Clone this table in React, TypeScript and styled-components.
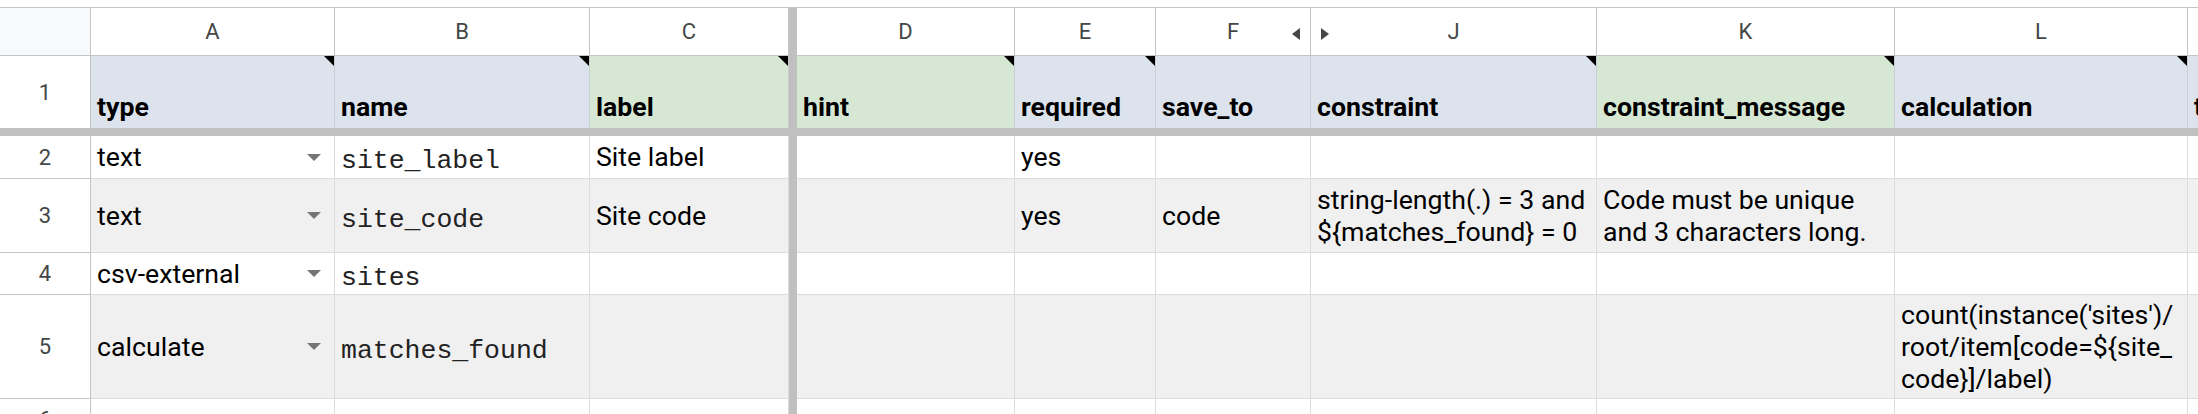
import React from 'react'
import styled, { createGlobalStyle } from 'styled-components'

const GlobalStyle = createGlobalStyle`
  html, body {
    margin: 0;
    padding: 0;
    background: #ffffff;
    overflow: hidden;
  }
  body {
    font-family: Roboto, "Liberation Sans", Arial, sans-serif;
  }
`

const BLUE = '#dde3ec'
const GREEN = '#d6e8d3'
const STRIPE = '#f0f0f0'
const CHROME_LINE = '#c4c4c4'
const CELL_LINE = '#dcdcdc'

// column widths, divider (frozen column split) included
const COLS = '91px 244px 255px 199px 8px 218px 141px 155px 286px 298px 293px 120px'

type Col = {
  letter: string
  header: string
  tint: string
  note: boolean
  hiddenLeft?: boolean
  hiddenRight?: boolean
}

const columns: Col[] = [
  { letter: 'A', header: 'type', tint: BLUE, note: true },
  { letter: 'B', header: 'name', tint: BLUE, note: true },
  { letter: 'C', header: 'label', tint: GREEN, note: true },
  { letter: 'D', header: 'hint', tint: GREEN, note: true },
  { letter: 'E', header: 'required', tint: BLUE, note: true },
  { letter: 'F', header: 'save_to', tint: BLUE, note: false, hiddenRight: true },
  { letter: 'J', header: 'constraint', tint: BLUE, note: true, hiddenLeft: true },
  { letter: 'K', header: 'constraint_message', tint: GREEN, note: true },
  { letter: 'L', header: 'calculation', tint: BLUE, note: true },
  { letter: 'M', header: 'trigger', tint: BLUE, note: false },
]

type Row = {
  num: number
  height: number
  striped: boolean
  type?: string
  cells: string[]
}

const rows: Row[] = [
  { num: 2, height: 43, striped: false, type: 'text', cells: ['site_label', 'Site label', '', 'yes', '', '', '', '', ''] },
  {
    num: 3,
    height: 74,
    striped: true,
    type: 'text',
    cells: [
      'site_code',
      'Site code',
      '',
      'yes',
      'code',
      'string-length(.) = 3 and\n${matches_found} = 0',
      'Code must be unique\nand 3 characters long.',
      '',
      '',
    ],
  },
  { num: 4, height: 42, striped: false, type: 'csv-external', cells: ['sites', '', '', '', '', '', '', '', ''] },
  {
    num: 5,
    height: 104,
    striped: true,
    type: 'calculate',
    cells: ['matches_found', '', '', '', '', '', '', "count(instance('sites')/\nroot/item[code=${site_\ncode}]/label)", ''],
  },
  { num: 6, height: 42, striped: false, cells: ['', '', '', '', '', '', '', '', ''] },
]

const Viewport = styled.div`
  width: 2198px;
  height: 414px;
  padding-top: 7px;
  box-sizing: border-box;
  overflow: hidden;
`

const Sheet = styled.div`
  width: max-content;
  border-top: 1px solid ${CHROME_LINE};
`

const GridRow = styled.div<{ $h: number }>`
  display: grid;
  grid-template-columns: ${COLS};
  height: ${(p) => p.$h}px;
`

const Corner = styled.div`
  background: #f8f9fa;
  border-right: 1px solid ${CHROME_LINE};
  border-bottom: 1px solid ${CHROME_LINE};
`

const ColLetter = styled.div`
  position: relative;
  display: flex;
  align-items: center;
  justify-content: center;
  background: #ffffff;
  border-right: 1px solid ${CHROME_LINE};
  border-bottom: 1px solid ${CHROME_LINE};
  color: #444746;
  font-size: 22px;
`

const HiddenArrow = styled.svg<{ $side: 'left' | 'right' }>`
  position: absolute;
  top: 20px;
  ${(p) => (p.$side === 'left' ? 'right: 10px;' : 'left: 10px;')}
`

const Divider = styled.div`
  background: #c0c0c0;
`

const RowNum = styled.div<{ $last?: boolean }>`
  display: flex;
  align-items: center;
  justify-content: center;
  background: #ffffff;
  border-right: 1px solid ${CHROME_LINE};
  border-bottom: ${(p) => (p.$last ? 'none' : `1px solid ${CHROME_LINE}`)};
  color: #444746;
  font-size: 22px;
`

const HeadCell = styled.div<{ $bg: string }>`
  position: relative;
  display: flex;
  align-items: flex-end;
  padding: 0 6px 5px;
  background: ${(p) => p.$bg};
  border-right: 1px solid #c9ced4;
  font-size: 26.7px;
  font-weight: 700;
  line-height: 32px;
  color: #000;
  white-space: nowrap;
  overflow: hidden;
`

const NoteMark = styled.span`
  position: absolute;
  top: 0;
  right: 0;
  width: 10px;
  height: 10px;
  background: #000;
  clip-path: polygon(0 0, 100% 0, 100% 100%);
`

const FreezeBand = styled.div`
  height: 8px;
  background: #c0c0c0;
`

const Cell = styled.div<{ $bg: string; $mono?: boolean }>`
  display: flex;
  align-items: center;
  justify-content: space-between;
  padding: ${(p) => (p.$mono ? '8px 6px 0' : '0 6px')};
  background: ${(p) => p.$bg};
  border-right: 1px solid ${CELL_LINE};
  border-bottom: 1px solid ${CELL_LINE};
  font-family: ${(p) => (p.$mono ? '"Liberation Mono", "Courier New", monospace' : 'Roboto, "Liberation Sans", sans-serif')};
  font-size: ${(p) => (p.$mono ? '26.5px' : '26.7px')};
  line-height: 32px;
  color: ${(p) => (p.$mono ? '#222' : '#000')};
  white-space: pre;
  overflow: hidden;
`

const Caret = styled.svg`
  flex: none;
  margin-right: 7px;
`

const DropCaret = () => (
  <Caret width="14" height="7" viewBox="0 0 14 7">
    <path d="M0 0h14L7 7z" fill="#757575" />
  </Caret>
)

const App = () => {
  return (
    <Viewport>
      <GlobalStyle />
      <Sheet>
        <GridRow $h={48}>
          <Corner />
          {columns.map((c, i) => (
            <React.Fragment key={c.letter}>
              {i === 3 && <Divider />}
              <ColLetter>
                {c.letter}
                {c.hiddenRight && (
                  <HiddenArrow $side="left" width="8" height="12" viewBox="0 0 8 12">
                    <path d="M8 0v12L0 6z" fill="#444746" />
                  </HiddenArrow>
                )}
                {c.hiddenLeft && (
                  <HiddenArrow $side="right" width="8" height="12" viewBox="0 0 8 12">
                    <path d="M0 0v12l8-6z" fill="#444746" />
                  </HiddenArrow>
                )}
              </ColLetter>
            </React.Fragment>
          ))}
        </GridRow>

        <GridRow $h={72}>
          <RowNum $last>1</RowNum>
          {columns.map((c, i) => (
            <React.Fragment key={c.letter}>
              {i === 3 && <Divider />}
              <HeadCell $bg={c.tint}>
                {c.header}
                {c.note && <NoteMark />}
              </HeadCell>
            </React.Fragment>
          ))}
        </GridRow>

        <FreezeBand />

        {rows.map((r) => {
          const bg = r.striped ? STRIPE : '#ffffff'
          return (
            <GridRow key={r.num} $h={r.height}>
              <RowNum>{r.num}</RowNum>
              <Cell $bg={bg}>
                <span>{r.type ?? ''}</span>
                {r.type && <DropCaret />}
              </Cell>
              {r.cells.map((txt, i) => (
                <React.Fragment key={i}>
                  {i === 2 && <Divider />}
                  <Cell $bg={bg} $mono={i === 0}>
                    {txt}
                  </Cell>
                </React.Fragment>
              ))}
            </GridRow>
          )
        })}
      </Sheet>
    </Viewport>
  )
}

export default App
